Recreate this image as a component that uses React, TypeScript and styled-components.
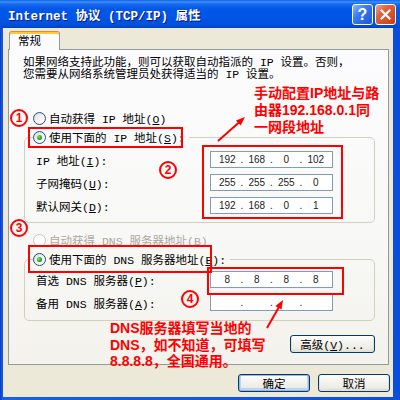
import React from "react";
import styled, { createGlobalStyle } from "styled-components";

const GlobalStyle = createGlobalStyle`
  html, body {
    margin: 0;
    padding: 0;
  }
  body {
    width: 400px;
    height: 400px;
    overflow: hidden;
    background: #ffffff;
  }
`;

const UI_FONT = `"Liberation Mono", "Noto Sans CJK SC", monospace`;
const NOTE_FONT = `"Liberation Sans", "Noto Sans CJK SC", sans-serif`;
const RED = "#ff0000";

// window frame

const Window = styled.div`
  position: relative;
  width: 400px;
  height: 400px;
  display: flex;
  flex-direction: column;
  background: linear-gradient(90deg, #0a3cc8 0, #1660ea 3px, #0a4fdc 100%);
  overflow: hidden;
`;

const TitleBar = styled.div`
  height: 28px;
  flex: none;
  display: flex;
  align-items: center;
  justify-content: space-between;
  padding: 0 4px 0 8px;
  background: linear-gradient(
    180deg,
    #0a5fe8 0%,
    #3d8ff8 7%,
    #1b6af0 14%,
    #0058e6 32%,
    #0055e5 62%,
    #0052de 86%,
    #0044c0 100%
  );
`;

const TitleText = styled.span`
  font-family: ${UI_FONT};
  font-weight: bold;
  font-size: 12.5px;
  color: #ffffff;
  text-shadow: 1px 1px 0 #0a1883;
  white-space: pre;
`;

const TitleButtons = styled.div`
  display: flex;
  gap: 2px;
  margin-top: 1px;
`;

const CaptionButton = styled.div<{ $close?: boolean }>`
  width: 21px;
  height: 21px;
  box-sizing: border-box;
  border: 1px solid #ffffff;
  border-radius: 3px;
  display: flex;
  align-items: center;
  justify-content: center;
  color: #ffffff;
  font-family: "Liberation Sans", sans-serif;
  font-weight: bold;
  font-size: 16px;
  background: ${(p) =>
    p.$close
      ? "linear-gradient(135deg, #f0a58a 0%, #e2613c 35%, #cf3a14 100%)"
      : "linear-gradient(135deg, #8fb8ff 0%, #3a78f2 40%, #1f55dc 100%)"};
`;

const Body = styled.div`
  flex: 1;
  margin: 0 7px 3px 3px;
  background: #ece9d8;
  display: flex;
  flex-direction: column;
`;

// tabs

const TabStrip = styled.div`
  height: 21px;
  flex: none;
  display: flex;
  align-items: flex-end;
  padding-left: 6px;
`;

const Tab = styled.div`
  position: relative;
  z-index: 1;
  width: 51px;
  height: 19px;
  box-sizing: border-box;
  margin-bottom: -1px;
  padding: 3px 0 0 8px;
  border: 1px solid #919b9c;
  border-top: 1px solid #e68b2c;
  border-bottom: none;
  border-radius: 3px 3px 0 0;
  box-shadow: inset 0 2px 0 #ffc83c;
  background: #fcfcfe;
  font-family: ${UI_FONT};
  font-size: 11.5px;
  line-height: 14px;
  color: #000;
`;

const Panel = styled.div`
  height: 316px;
  flex: none;
  box-sizing: border-box;
  margin: 0 4px 0 5px;
  padding: 7px 13px 0 14px;
  border: 1px solid #919b9c;
  background: linear-gradient(180deg, #fcfcfe 0%, #f8f8f6 60%, #f3f2ec 100%);
  display: flex;
  flex-direction: column;
  font-family: ${UI_FONT};
  font-size: 11.5px;
  color: #000;
`;

const Description = styled.p`
  margin: 0;
  line-height: 12px;
  white-space: pre;
`;

// radio buttons

const RadioRow = styled.div<{ $top?: number; $disabled?: boolean }>`
  display: flex;
  align-items: center;
  gap: 3px;
  height: 16px;
  padding-left: 10px;
  margin-top: ${(p) => p.$top ?? 0}px;
  color: ${(p) => (p.$disabled ? "#aca899" : "#000")};
  white-space: pre;
`;

const Radio = styled.span<{ $checked?: boolean; $disabled?: boolean }>`
  position: relative;
  width: 13px;
  height: 13px;
  box-sizing: border-box;
  border-radius: 50%;
  border: 1px solid ${(p) => (p.$disabled ? "#cac8bb" : "#1c5180")};
  background: ${(p) =>
    p.$disabled
      ? "#ffffff"
      : "linear-gradient(135deg, #dcdcd6 0%, #f2f2ee 50%, #ffffff 100%)"};
  flex: none;

  &::after {
    content: "";
    display: ${(p) => (p.$checked ? "block" : "none")};
    position: absolute;
    left: 3px;
    top: 3px;
    width: 5px;
    height: 5px;
    border-radius: 50%;
    background: radial-gradient(circle at 35% 35%, #7be07a 0%, #21a121 60%, #117a11 100%);
  }
`;

// group boxes

const GroupBox = styled.fieldset<{ $top: number; $padTop: number; $padBottom: number }>`
  margin: ${(p) => p.$top}px 0 0 1px;
  padding: ${(p) => p.$padTop}px 0 ${(p) => p.$padBottom}px 0;
  border: 1px solid #d0d0bf;
  border-radius: 5px;
  min-inline-size: 0;
`;

const Legend = styled.legend`
  margin-left: 8px;
  padding: 0 4px 0 0;
`;

const LegendRow = styled(RadioRow)`
  padding-left: 0;
`;

const FieldRow = styled.div`
  display: grid;
  grid-template-columns: 174px 123px;
  align-items: center;
  height: 23px;
  padding-left: 11px;
  white-space: pre;
`;

const IPField = styled.div`
  width: 123px;
  height: 17px;
  box-sizing: border-box;
  border: 1px solid #7f9db9;
  background: #ffffff;
  display: flex;
  align-items: center;
  padding: 0 4px;
  font-family: "Liberation Sans", sans-serif;
  font-size: 10px;
  color: #222;
`;

const Segment = styled.span`
  flex: 1;
  text-align: center;
`;

const Dot = styled.span`
  width: 5px;
  text-align: center;
`;

// buttons

const AdvancedRow = styled.div`
  display: flex;
  justify-content: flex-end;
  margin-top: 14px;
`;

const Button = styled.button<{ $w: number; $default?: boolean }>`
  width: ${(p) => p.$w}px;
  height: 18px;
  padding: 0;
  border: 1px solid #003c74;
  border-radius: 3px;
  background: linear-gradient(180deg, #ffffff 0%, #f4f3ee 40%, #ecebe4 80%, #d6d0c5 100%);
  box-shadow: ${(p) =>
    p.$default
      ? "inset 0 0 0 1px #98b8ea, inset 0 -1px 0 2px #bcd4f6"
      : "inset 0 -1px 0 1px #e3e0d6"};
  font-family: ${UI_FONT};
  font-size: 11.5px;
  color: #000;
  white-space: pre;
`;

const ButtonRow = styled.div`
  display: flex;
  justify-content: flex-end;
  gap: 8px;
  padding: 9px 3px 0 0;
`;

// annotations drawn over the dialog

const Frame = styled.div<{ $x: number; $y: number; $w: number; $h: number }>`
  position: absolute;
  left: ${(p) => p.$x}px;
  top: ${(p) => p.$y}px;
  width: ${(p) => p.$w}px;
  height: ${(p) => p.$h}px;
  box-sizing: border-box;
  border: 2px solid ${RED};
  pointer-events: none;
`;

const StepBadge = styled.div<{ $x: number; $y: number }>`
  position: absolute;
  left: ${(p) => p.$x}px;
  top: ${(p) => p.$y}px;
  width: 18px;
  height: 18px;
  box-sizing: border-box;
  border: 2px solid ${RED};
  border-radius: 50%;
  display: flex;
  align-items: center;
  justify-content: center;
  color: ${RED};
  font-family: "Liberation Sans", sans-serif;
  font-weight: bold;
  font-size: 12px;
  line-height: 1;
`;

const Note = styled.div<{ $x: number; $y: number; $lh: number }>`
  position: absolute;
  left: ${(p) => p.$x}px;
  top: ${(p) => p.$y}px;
  font-family: ${NOTE_FONT};
  font-weight: bold;
  font-size: 14px;
  line-height: ${(p) => p.$lh}px;
  color: ${RED};
  white-space: pre;
`;

const ArrowLayer = styled.svg`
  position: absolute;
  left: 0;
  top: 0;
  pointer-events: none;
`;

const IP = ({ parts }: { parts: string[] }) => (
  <IPField>
    <Segment>{parts[0]}</Segment>
    <Dot>.</Dot>
    <Segment>{parts[1]}</Segment>
    <Dot>.</Dot>
    <Segment>{parts[2]}</Segment>
    <Dot>.</Dot>
    <Segment>{parts[3]}</Segment>
  </IPField>
);

export default function App() {
  return (
    <>
      <GlobalStyle />
      <Window>
        <TitleBar>
          <TitleText>Internet 协议 (TCP/IP) 属性</TitleText>
          <TitleButtons>
            <CaptionButton>?</CaptionButton>
            <CaptionButton $close>
              <svg width="11" height="11" viewBox="0 0 11 11">
                <path d="M1.5 1.5 L9.5 9.5 M9.5 1.5 L1.5 9.5" stroke="#fff" strokeWidth="2.2" strokeLinecap="square" />
              </svg>
            </CaptionButton>
          </TitleButtons>
        </TitleBar>

        <Body>
          <TabStrip>
            <Tab>常规</Tab>
          </TabStrip>

          <Panel>
            <Description>
              {"如果网络支持此功能，则可以获取自动指派的 IP 设置。否则，\n您需要从网络系统管理员处获得适当的 IP 设置。"}
            </Description>

            <RadioRow $top={29}>
              <Radio />
              <span>
                自动获得 IP 地址(<u>O</u>)
              </span>
            </RadioRow>

            <GroupBox $top={3} $padTop={3} $padBottom={5}>
              <Legend>
                <LegendRow>
                  <Radio $checked />
                  <span>
                    使用下面的 IP 地址(<u>S</u>):
                  </span>
                </LegendRow>
              </Legend>
              <FieldRow>
                <span>
                  IP 地址(<u>I</u>):
                </span>
                <IP parts={["192", "168", "0", "102"]} />
              </FieldRow>
              <FieldRow>
                <span>
                  子网掩码(<u>U</u>):
                </span>
                <IP parts={["255", "255", "255", "0"]} />
              </FieldRow>
              <FieldRow>
                <span>
                  默认网关(<u>D</u>):
                </span>
                <IP parts={["192", "168", "0", "1"]} />
              </FieldRow>
            </GroupBox>

            <RadioRow $top={9} $disabled>
              <Radio $disabled />
              <span>
                自动获得 DNS 服务器地址(<u>B</u>)
              </span>
            </RadioRow>

            <GroupBox $top={3} $padTop={1} $padBottom={6}>
              <Legend>
                <LegendRow>
                  <Radio $checked />
                  <span>
                    使用下面的 DNS 服务器地址(<u>E</u>):
                  </span>
                </LegendRow>
              </Legend>
              <FieldRow>
                <span>
                  首选 DNS 服务器(<u>P</u>):
                </span>
                <IP parts={["8", "8", "8", "8"]} />
              </FieldRow>
              <FieldRow>
                <span>
                  备用 DNS 服务器(<u>A</u>):
                </span>
                <IP parts={["", "", "", ""]} />
              </FieldRow>
            </GroupBox>

            <AdvancedRow>
              <Button $w={85}>
                高级(<u>V</u>)...
              </Button>
            </AdvancedRow>
          </Panel>

          <ButtonRow>
            <Button $w={72} $default>
              确定
            </Button>
            <Button $w={72}>取消</Button>
          </ButtonRow>
        </Body>

        <Frame $x={28} $y={127} $w={155} $h={21} />
        <Frame $x={202} $y={145} $w={141} $h={74} />
        <Frame $x={28} $y={245} $w={184} $h={28} />
        <Frame $x={207} $y={267} $w={137} $h={28} />

        <StepBadge $x={10} $y={109}>1</StepBadge>
        <StepBadge $x={159} $y={161}>2</StepBadge>
        <StepBadge $x={10} $y={219}>3</StepBadge>
        <StepBadge $x={181} $y={290}>4</StepBadge>

        <Note $x={254} $y={85} $lh={17}>
          {"手动配置IP地址与路\n由器192.168.0.1同\n一网段地址"}
        </Note>
        <Note $x={110} $y={320} $lh={16.5}>
          {"DNS服务器填写当地的\nDNS，如不知道，可填写\n8.8.8.8，全国通用。"}
        </Note>

        <ArrowLayer width="400" height="400" viewBox="0 0 400 400">
          <line x1="218" y1="141" x2="239.5" y2="122" stroke={RED} strokeWidth="2" />
          <polygon points="245,117 240.6,125.6 236,120.4" fill={RED} />
          <line x1="267" y1="328" x2="279" y2="307" stroke={RED} strokeWidth="2" />
          <polygon points="283,300 281.5,309.6 275.4,306.1" fill={RED} />
        </ArrowLayer>
      </Window>
    </>
  );
}
